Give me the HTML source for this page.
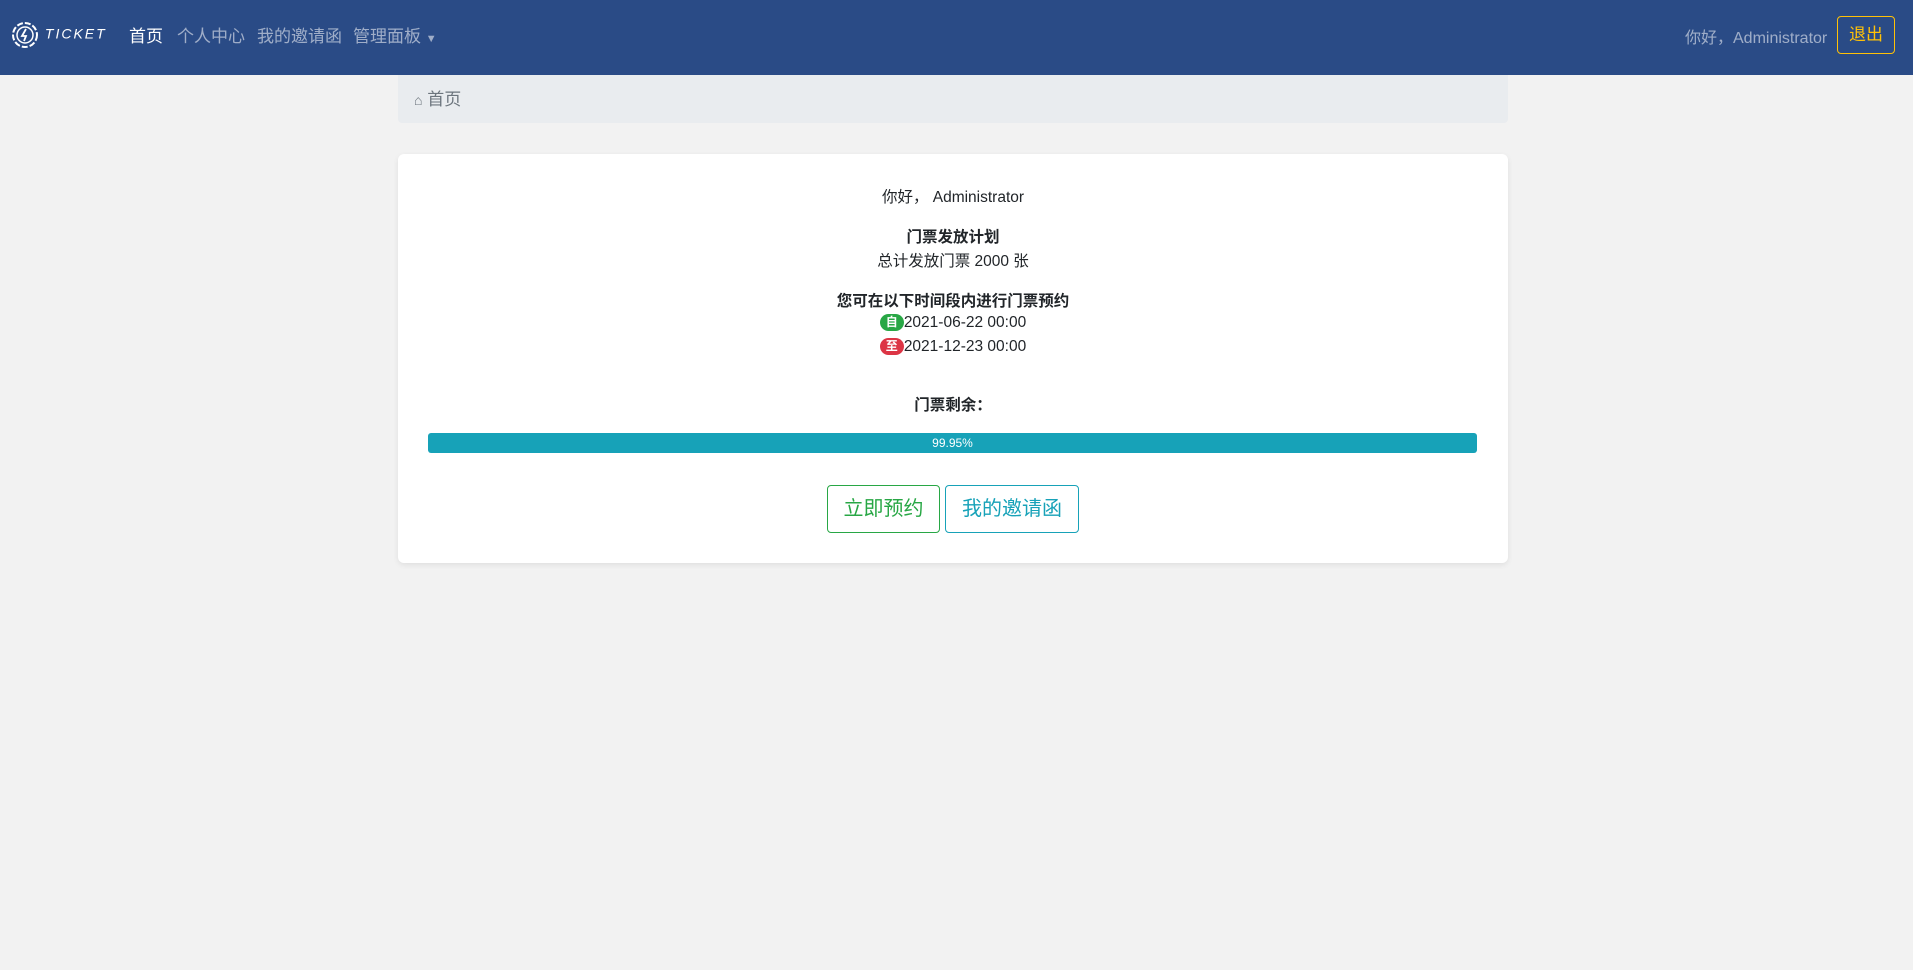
<!DOCTYPE html>
<html><head><meta charset="utf-8"><style>
*{box-sizing:border-box;margin:0;padding:0}
body{width:1913px;height:970px;background:#f2f2f2;font-family:"Liberation Sans","Noto Sans CJK SC",sans-serif;font-size:16px;color:#212529;position:relative;overflow:hidden}
.nav{position:absolute;left:0;top:0;width:1913px;height:75px;background:#2a4b86}
.nav a{position:absolute;top:22px;color:rgba(255,255,255,.55);font-size:17px;text-decoration:none;white-space:nowrap}
.logo{position:absolute;left:11px;top:18px;color:#fff;font-style:italic;font-size:14px;letter-spacing:2px}
.bc{position:absolute;left:398px;top:75px;width:1110px;height:48px;background:#e9ecef;border-radius:0 0 4px 4px;color:#6c757d;padding:10px 16px;font-size:17px}
.card{position:absolute;left:398px;top:154px;width:1110px;height:409px;background:#fff;border-radius:6px;box-shadow:0 2px 6px rgba(0,0,0,.08)}
.t{position:absolute;left:0;width:1110px;text-align:center;font-size:15.5px}
.b{font-weight:bold}
.badge{display:inline-block;color:#fff;font-size:12px;font-weight:bold;border-radius:9px;padding:1px 6px;line-height:15px;vertical-align:1px}
.bar{position:absolute;left:30px;top:279px;width:1049px;height:20px;background:#17a2b8;border-radius:3px;color:#fff;font-size:12px;text-align:center;line-height:20px}
.btn{position:absolute;top:331px;height:48px;border:1px solid;border-radius:4px;font-size:20px;line-height:46px;text-align:center}
</style></head><body>
<div class="nav">
<div class="logo"><svg width="28" height="34" viewBox="0 0 28 34" style="vertical-align:middle"><circle cx="14" cy="17" r="12" fill="none" stroke="#fff" stroke-width="2" stroke-dasharray="6 2"/><circle cx="14" cy="17" r="8" fill="none" stroke="#fff" stroke-width="1.5"/><path d="M15 11l-4 7h4l-2 5" fill="none" stroke="#fff" stroke-width="1.8"/></svg> TICKET</div>
<a style="left:129px;color:#fff">首页</a>
<a style="left:177px">个人中心</a>
<a style="left:257px">我的邀请函</a>
<a style="left:353px">管理面板 <span style="font-size:11px">▼</span></a>
<a style="left:1685px;top:24px;font-size:16px">你好，Administrator</a>
<div style="position:absolute;left:1837px;top:16px;width:58px;height:38px;border:1px solid #ffc107;border-radius:4px;color:#ffc107;font-size:17px;text-align:center;line-height:36px">退出</div>
</div>
<div class="bc"><span style="font-size:14px">&#8962;</span> 首页</div>
<div class="card">
<div class="t" style="top:31px">你好， Administrator</div>
<div class="t b" style="top:71px">门票发放计划</div>
<div class="t" style="top:95px">总计发放门票 2000 张</div>
<div class="t b" style="top:135px">您可在以下时间段内进行门票预约</div>
<div class="t" style="top:160px"><span class="badge" style="background:#28a745">自</span>2021-06-22 00:00</div>
<div class="t" style="top:184px"><span class="badge" style="background:#dc3545">至</span>2021-12-23 00:00</div>
<div class="t b" style="top:239px">门票剩余：</div>
<div class="bar">99.95%</div>
<div class="btn" style="left:429px;width:113px;border-color:#28a745;color:#28a745">立即预约</div>
<div class="btn" style="left:547px;width:134px;border-color:#17a2b8;color:#17a2b8">我的邀请函</div>
</div>
</body></html>
